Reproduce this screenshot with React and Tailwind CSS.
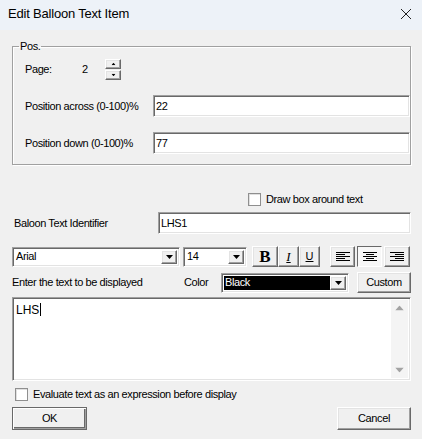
import { useState } from 'react';

const sunken =
  'border border-t-[#a0a0a0] border-l-[#a0a0a0] border-b-white border-r-white shadow-[inset_1px_1px_0_#696969,inset_-1px_-1px_0_#e3e3e3] bg-white';
const raised =
  'border border-t-white border-l-white border-b-[#696969] border-r-[#696969] shadow-[inset_-1px_-1px_0_#a0a0a0,inset_1px_1px_0_#e3e3e3] bg-[#f0f0f0]';

function Arrow({ up = false, className = '' }) {
  return (
    <svg width="7" height="4" viewBox="0 0 7 4" className={className}>
      {up ? <path d="M3.5 0L7 4H0z" fill="currentColor" /> : <path d="M0 0h7L3.5 4z" fill="currentColor" />}
    </svg>
  );
}

function Checkbox({ checked }) {
  return (
    <div className="h-[13px] w-[13px] border border-[#8f8f8f] bg-white shadow-[inset_1px_1px_0_#e0e0e0]">
      {checked && (
        <svg width="11" height="11" viewBox="0 0 11 11">
          <path d="M2 5l2 2 5-5" stroke="black" strokeWidth="1.5" fill="none" />
        </svg>
      )}
    </div>
  );
}

function DropButton() {
  return (
    <div className={`${raised} flex h-full w-[16px] items-center justify-center text-black`}>
      <Arrow />
    </div>
  );
}

function Combo({ value, className = '', dark = false }) {
  return (
    <div className={`${sunken} flex h-[20px] items-stretch p-[2px] ${className}`}>
      <div
        className={`flex flex-1 items-center pl-[1px] ${dark ? 'bg-black text-white' : 'bg-white text-black'}`}
      >
        {value}
      </div>
      <DropButton />
    </div>
  );
}

function AlignIcon({ kind }) {
  const lines =
    kind === 'left'
      ? [[0, 14], [0, 9], [0, 14], [0, 9], [0, 14]]
      : kind === 'center'
      ? [[0, 14], [3, 11], [0, 14], [3, 11], [0, 14]]
      : [[0, 14], [5, 14], [0, 14], [5, 14], [0, 14]];
  return (
    <svg width="14" height="9" viewBox="0 0 14 9">
      {lines.map(([a, b], i) => (
        <rect key={i} x={a} y={i * 2} width={b - a} height="1" fill="black" />
      ))}
    </svg>
  );
}

export default function App() {
  const [text] = useState('LHS');

  return (
    <div
      className="flex h-[439px] w-[422px] flex-col bg-[#f0f0f0] text-[11px] leading-[13px] tracking-[-0.4px] text-black"
      style={{ fontFamily: '"Liberation Sans", Arial, sans-serif' }}
    >
      <header className="flex h-[30px] items-center justify-between bg-[#edf2f8] pl-[8px] pr-[10px]">
        <span className="pb-[3px] text-[13px] tracking-[-0.2px]">Edit Balloon Text Item</span>
        <svg width="12" height="12" viewBox="0 0 12 12" className="mb-[3px]">
          <path d="M1 1l10 10M11 1L1 11" stroke="#222" strokeWidth="1" />
        </svg>
      </header>

      <main className="flex flex-1 flex-col pl-[12px] pr-[11px]">
        <fieldset className="mt-[10px] border border-[#a0a0a0] pb-[10px] shadow-[inset_1px_1px_0_white,1px_1px_0_white]">
          <legend className="ml-[6px] px-[1px]">Pos.</legend>

          <div className="mt-[5px] flex h-[22px] items-center pl-[12px]">
            <span className="w-[57px]">Page:</span>
            <span className="w-[23px]">2</span>
            <div className="flex flex-col gap-[1px]">
              <div className={`${raised} flex h-[10px] w-[16px] items-center justify-center`}>
                <Arrow up className="scale-[0.6]" />
              </div>
              <div className={`${raised} flex h-[10px] w-[16px] items-center justify-center`}>
                <Arrow className="scale-[0.6]" />
              </div>
            </div>
          </div>

          <div className="mt-[15px] flex h-[22px] items-center pl-[12px]">
            <span className="w-[128px]">Position across (0-100)%</span>
            <div className={`${sunken} flex h-full flex-1 items-center pl-[2px]`}>22</div>
          </div>

          <div className="mt-[15px] flex h-[22px] items-center pl-[12px]">
            <span className="w-[128px]">Position down (0-100)%</span>
            <div className={`${sunken} flex h-full flex-1 items-center pl-[2px]`}>77</div>
          </div>
        </fieldset>

        <div className="mt-[28px] flex items-center gap-[5px] pl-[236px]">
          <Checkbox />
          <span>Draw box around text</span>
        </div>

        <div className="mt-[6px] flex h-[22px] items-center pl-[2px]">
          <span className="w-[144px]">Baloon Text Identifier</span>
          <div className={`${sunken} flex h-full flex-1 items-center pl-[2px]`}>LHS1</div>
        </div>

        <div className="mt-[12px] flex h-[21px] items-center">
          <Combo value="Arial" className="w-[168px]" />
          <Combo value="14" className="ml-[3px] w-[64px]" />
          <div className="ml-[5px] flex h-full">
            <div className={`${raised} flex w-[26px] items-center justify-center`}>
              <span
                className="text-[17px] font-bold leading-none tracking-normal"
                style={{ fontFamily: '"Liberation Serif", serif' }}
              >
                B
              </span>
            </div>
            <div className={`${raised} flex w-[21px] items-center justify-center`}>
              <span
                className="text-[13px] italic leading-none tracking-normal underline"
                style={{ fontFamily: '"Liberation Serif", serif' }}
              >
                I
              </span>
            </div>
            <div className={`${raised} flex w-[21px] items-center justify-center`}>
              <span className="text-[11px] leading-none tracking-normal underline">U</span>
            </div>
          </div>
          <div className="ml-[10px] flex h-full gap-[2px]">
            <div className={`${raised} flex w-[25px] items-center justify-center`}>
              <AlignIcon kind="left" />
            </div>
            <div className="flex w-[25px] items-center justify-center border border-t-[#696969] border-l-[#696969] border-b-white border-r-white bg-[#f7f7f7]">
              <AlignIcon kind="center" />
            </div>
            <div className={`${raised} flex w-[26px] items-center justify-center`}>
              <AlignIcon kind="right" />
            </div>
          </div>
        </div>

        <div className="mt-[5px] flex h-[21px] items-center">
          <span className="w-[172px]">Enter the text to be displayed</span>
          <span className="w-[37px]">Color</span>
          <Combo value="Black" dark className="w-[128px]" />
          <div className={`${raised} ml-[8px] flex h-full flex-1 items-center justify-center`}>
            Custom
          </div>
        </div>

        <div className={`${sunken} mt-[4px] flex h-[84px] p-[2px]`}>
          <div className="flex-1 pl-[1px] pt-[1px] text-[12px] tracking-normal">
            {text}
            <span className="ml-[1px] inline-block h-[13px] w-[1px] translate-y-[2px] bg-black" />
          </div>
          <div className="flex w-[17px] flex-col items-center justify-between bg-[#f4f4f4] py-[6px] text-[#a3a3a3]">
            <Arrow up className="scale-125" />
            <Arrow className="scale-125" />
          </div>
        </div>

        <div className="mt-[7px] flex items-center gap-[5px] pl-[3px]">
          <Checkbox />
          <span>Evaluate text as an expression before display</span>
        </div>

        <div className="mt-[6px] flex h-[23px] justify-between">
          <div className="flex w-[75px] items-center justify-center border border-[#696969] bg-[#f0f0f0] shadow-[inset_1px_1px_0_white,inset_-1px_-1px_0_#a0a0a0,inset_-2px_-2px_0_#696969]">
            OK
          </div>
          <div className={`${raised} flex w-[74px] items-center justify-center`}>Cancel</div>
        </div>
      </main>
    </div>
  );
}
